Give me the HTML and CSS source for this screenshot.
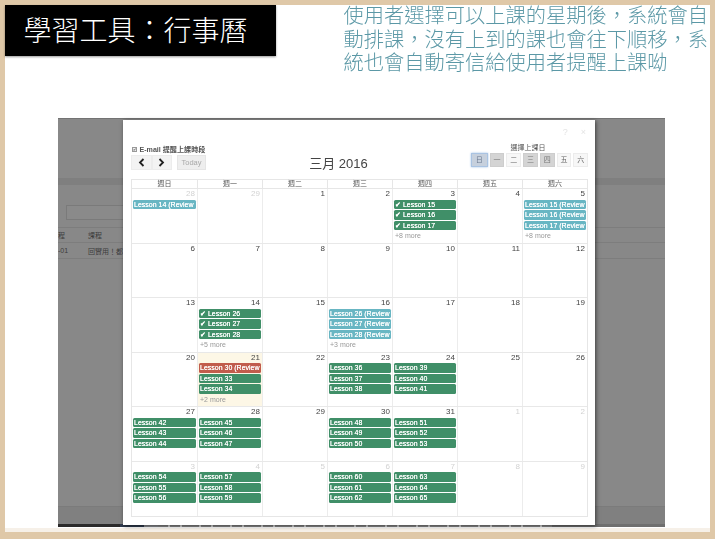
FILE: index.html
```html
<!DOCTYPE html>
<html lang="zh-Hant">
<head>
<meta charset="utf-8">
<title>學習工具：行事曆</title>
<link rel="stylesheet" href="styles.css">
</head>
<body>
<main class="slide">
  <header class="top">
    <h1 class="title">學習工具：行事曆</h1>
    <p class="desc">使用者選擇可以上課的星期後，系統會自動排課，沒有上到的課也會往下順移，系統也會自動寄信給使用者提醒上課呦</p>
  </header>
  <section class="screen">
    <div class="bg-band"></div>
    <div class="bg-input"></div>
    <div class="bg-head"><span class="bg-c1">程</span><span>課程</span></div>
    <div class="bg-row"><span class="bg-c1">-01</span><span>回實用！都</span></div>
    <div class="bg-spacer"></div>
    <div class="bg-foot"></div>
    <div class="bg-strip"></div>
    <div class="modal">
      <div class="help"><span>?</span><span>×</span></div>
      <div class="toolbar">
        <div class="tool-left">
          <label class="email"><span class="check">✔</span><b>E-mail 提醒上課時段</b></label>
          <div class="nav">
            <div class="nav-group"><span class="nav-btn">
              <svg width="7" height="9" viewBox="0 0 7 9"><path d="M5.5 1 2 4.500 5.500 8" fill="none" stroke="#222" stroke-width="1.800"/></svg>
            </span><span class="nav-btn">
              <svg width="7" height="9" viewBox="0 0 7 9"><path d="M1.500 1 5 4.500 1.500 8" fill="none" stroke="#222" stroke-width="1.800"/></svg>
            </span></div>
            <span class="today">Today</span>
          </div>
        </div>
        <h2 class="month">三月 2016</h2>
        <div class="tool-right">
          <div class="pick-label">選擇上課日</div>
          <div class="days">
            <span class="day focus">日</span><span class="day on">一</span><span class="day">二</span><span class="day on">三</span><span class="day on">四</span><span class="day">五</span><span class="day">六</span>
          </div>
        </div>
      </div>
      <div class="calendar">
        <div class="cal-head"><span>週日</span><span>週一</span><span>週二</span><span>週三</span><span>週四</span><span>週五</span><span>週六</span></div>
        <div class="weeks">
          <div class="week">
            <div class="cell"><span class="num dim">28</span><span class="ev teal">Lesson 14 (Review</span></div>
            <div class="cell"><span class="num dim">29</span></div>
            <div class="cell"><span class="num">1</span></div>
            <div class="cell"><span class="num">2</span></div>
            <div class="cell"><span class="num">3</span><span class="ev green">✔ Lesson 15</span><span class="ev green">✔ Lesson 16</span><span class="ev green">✔ Lesson 17</span><span class="more">+8 more</span></div>
            <div class="cell"><span class="num">4</span></div>
            <div class="cell"><span class="num">5</span><span class="ev teal">Lesson 15 (Review</span><span class="ev teal">Lesson 16 (Review</span><span class="ev teal">Lesson 17 (Review</span><span class="more">+8 more</span></div>
          </div>
          <div class="week">
            <div class="cell"><span class="num">6</span></div>
            <div class="cell"><span class="num">7</span></div>
            <div class="cell"><span class="num">8</span></div>
            <div class="cell"><span class="num">9</span></div>
            <div class="cell"><span class="num">10</span></div>
            <div class="cell"><span class="num">11</span></div>
            <div class="cell"><span class="num">12</span></div>
          </div>
          <div class="week">
            <div class="cell"><span class="num">13</span></div>
            <div class="cell"><span class="num">14</span><span class="ev green">✔ Lesson 26</span><span class="ev green">✔ Lesson 27</span><span class="ev green">✔ Lesson 28</span><span class="more">+5 more</span></div>
            <div class="cell"><span class="num">15</span></div>
            <div class="cell"><span class="num">16</span><span class="ev teal">Lesson 26 (Review</span><span class="ev teal">Lesson 27 (Review</span><span class="ev teal">Lesson 28 (Review</span><span class="more">+3 more</span></div>
            <div class="cell"><span class="num">17</span></div>
            <div class="cell"><span class="num">18</span></div>
            <div class="cell"><span class="num">19</span></div>
          </div>
          <div class="week">
            <div class="cell"><span class="num">20</span></div>
            <div class="cell today-cell"><span class="num">21</span><span class="ev red">Lesson 30 (Review</span><span class="ev green">Lesson 33</span><span class="ev green">Lesson 34</span><span class="more">+2 more</span></div>
            <div class="cell"><span class="num">22</span></div>
            <div class="cell"><span class="num">23</span><span class="ev green">Lesson 36</span><span class="ev green">Lesson 37</span><span class="ev green">Lesson 38</span></div>
            <div class="cell"><span class="num">24</span><span class="ev green">Lesson 39</span><span class="ev green">Lesson 40</span><span class="ev green">Lesson 41</span></div>
            <div class="cell"><span class="num">25</span></div>
            <div class="cell"><span class="num">26</span></div>
          </div>
          <div class="week">
            <div class="cell"><span class="num">27</span><span class="ev green">Lesson 42</span><span class="ev green">Lesson 43</span><span class="ev green">Lesson 44</span></div>
            <div class="cell"><span class="num">28</span><span class="ev green">Lesson 45</span><span class="ev green">Lesson 46</span><span class="ev green">Lesson 47</span></div>
            <div class="cell"><span class="num">29</span></div>
            <div class="cell"><span class="num">30</span><span class="ev green">Lesson 48</span><span class="ev green">Lesson 49</span><span class="ev green">Lesson 50</span></div>
            <div class="cell"><span class="num">31</span><span class="ev green">Lesson 51</span><span class="ev green">Lesson 52</span><span class="ev green">Lesson 53</span></div>
            <div class="cell"><span class="num dim">1</span></div>
            <div class="cell"><span class="num dim">2</span></div>
          </div>
          <div class="week">
            <div class="cell"><span class="num dim">3</span><span class="ev green">Lesson 54</span><span class="ev green">Lesson 55</span><span class="ev green">Lesson 56</span></div>
            <div class="cell"><span class="num dim">4</span><span class="ev green">Lesson 57</span><span class="ev green">Lesson 58</span><span class="ev green">Lesson 59</span></div>
            <div class="cell"><span class="num dim">5</span></div>
            <div class="cell"><span class="num dim">6</span><span class="ev green">Lesson 60</span><span class="ev green">Lesson 61</span><span class="ev green">Lesson 62</span></div>
            <div class="cell"><span class="num dim">7</span><span class="ev green">Lesson 63</span><span class="ev green">Lesson 64</span><span class="ev green">Lesson 65</span></div>
            <div class="cell"><span class="num dim">8</span></div>
            <div class="cell"><span class="num dim">9</span></div>
          </div>
        </div>
      </div>
    </div>
  </section>
</main>
</body>
</html>
```
FILE: styles.css
```css
* { box-sizing: border-box; }
html, body { margin: 0; height: 100%; }
body {
  width: 715px;
  height: 539px;
  overflow: hidden;
  background: #dfc8a8;
  font-family: "Liberation Sans", "Noto Sans CJK TC", sans-serif;
}
.slide {
  width: 705px;
  height: 523px;
  margin: 5px 0 0 5px;
  background: #fff;
  box-shadow: 0 4px 0 #f6f0e8;
  display: flex;
  flex-direction: column;
}
.top {
  height: 113px;
  display: flex;
  align-items: flex-start;
  flex: none;
}
.title {
  width: 271px;
  height: 51px;
  margin: 0;
  padding: 0 0 0 18.500px;
  background: #000;
  color: #fff;
  font: 300 28px/49px "Noto Sans CJK TC", sans-serif;
  box-shadow: 0 1px 2px rgba(0, 0, 0, .4);
  white-space: nowrap;
}
.desc {
  width: 366px;
  margin: -2px 0 0 67.500px;
  color: #5b98a6;
  font: 300 20.250px/23.500px "Noto Sans CJK TC", sans-serif;
  filter: blur(.3px);
}
.screen {
  position: relative;
  width: 607px;
  height: 409px;
  margin-left: 53px;
  flex: none;
  display: flex;
  flex-direction: column;
  background: #888;
  border-top: 1px solid #737373;
  color: #3f3f3f;
  font-size: 7px;
  filter: blur(.35px);
}
.bg-band { height: 7px; margin-top: 59px; background: #7f7f7f; flex: none; }
.bg-input {
  width: 100px;
  height: 15px;
  margin: 20px 0 0 8px;
  border: 1px solid #7a7a7a;
  background: #8a8a8a;
  flex: none;
}
.bg-head, .bg-row {
  height: 16px;
  display: flex;
  align-items: center;
  flex: none;
  border-bottom: 1px solid #7d7d7d;
  color: #3c3c3c;
}
.bg-head { margin-top: 7px; border-top: 1px solid #7d7d7d; }
.bg-c1 { width: 30px; flex: none; }
.bg-spacer { flex: 1; }
.bg-foot { height: 18px; border-top: 1px solid #7b7b7b; background: #808080; flex: none; }
.bg-strip {
  height: 3px;
  flex: none;
  background:
    linear-gradient(90deg, #2b2a2a 0 62px, #2f3a4d 62px 86px, #8d8f93 86px 100px, transparent 100px 494px, #6f6f6f 494px),
    repeating-linear-gradient(90deg, #8b8b8b 0 17px, #dcdcdc 17px 19px, #8b8b8b 19px 29px, #dcdcdc 29px 31px);
}
.modal {
  position: absolute;
  left: 65px;
  top: 1px;
  width: 472px;
  height: 405px;
  padding: 8px 7px 0 8px;
  background: #fff;
  box-shadow: 1px 1px 4px rgba(0, 0, 0, .55);
  display: flex;
  flex-direction: column;
}
.help {
  height: 8px;
  margin-bottom: 7px;
  padding-right: 2px;
  display: flex;
  justify-content: flex-end;
  gap: 13px;
  color: #e4e4e4;
  font-size: 9px;
  line-height: 8px;
  flex: none;
}
.toolbar {
  height: 36px;
  display: flex;
  justify-content: space-between;
  flex: none;
}
.tool-left { width: 75px; display: flex; flex-direction: column; }
.email {
  height: 10px;
  margin-top: 1px;
  padding-left: 1px;
  display: flex;
  align-items: center;
  gap: 2.500px;
  color: #555;
  font-size: 7.100px;
  white-space: nowrap;
}
.email b { font-weight: 700; }
.check {
  width: 5px;
  height: 5px;
  border: 1px solid #999;
  background: #eee;
  font-size: 4px;
  line-height: 3px;
  overflow: hidden;
  flex: none;
}
.nav { display: flex; gap: 5px; margin-top: 1px; }
.nav-group { display: flex; flex: none; }
.nav-btn {
  width: 20.500px;
  height: 15px;
  background: #f3f3f3;
  border: 1px solid #ececec;
  display: flex;
  align-items: center;
  justify-content: center;
}
.today {
  width: 29px;
  height: 15px;
  flex: none;
  background: #eeeeee;
  border: 1px solid #e5e5e5;
  color: #a9a9a9;
  font-size: 7.500px;
  line-height: 13px;
  text-align: center;
}
.month {
  margin: 12px 0 0;
  color: #444;
  font: 400 13px/18px "Liberation Sans", "Noto Sans CJK TC", sans-serif;
  white-space: nowrap;
}
.tool-right { width: 117px; display: flex; flex-direction: column; align-items: center; }
.pick-label { height: 10px; margin-right: 3px; color: #555; font-size: 7px; line-height: 9px; }
.days { display: flex; gap: 2px; width: 100%; justify-content: flex-end; }
.day {
  width: 15px;
  height: 14px;
  background: #f7f7f7;
  border: 1px solid #ececec;
  color: #666;
  font-size: 7px;
  line-height: 12px;
  text-align: center;
}
.day.on { background: #d4d4d4; border-color: #cdcdcd; color: #777; }
.day.focus {
  width: 17px;
  background: #c6d0dd;
  border-color: #a9c3e2;
  color: #6a7a90;
  box-shadow: 0 0 2px #9fc0e6;
}
.calendar {
  width: 457px;
  height: 338px;
  display: flex;
  flex-direction: column;
  flex: none;
  border: 1px solid #e6e6e6;
}
.cal-head {
  height: 9px;
  display: grid;
  grid-template-columns: repeat(7, 1fr);
  border-bottom: 1px solid #e6e6e6;
  color: #555;
  font-size: 7px;
  line-height: 8px;
  text-align: center;
  flex: none;
}
.cal-head span { border-left: 1px solid #e6e6e6; }
.cal-head span:first-child { border-left: 0; }
.weeks { flex: 1; display: grid; grid-auto-rows: 1fr; min-height: 0; }
.week {
  display: grid;
  grid-template-columns: repeat(7, 1fr);
  border-bottom: 1px solid #e8e8e8;
  min-width: 0;
}
.week:last-child { border-bottom: 0; }
.cell {
  min-width: 0;
  padding: 0 1px 0 1px;
  border-left: 1px solid #ececec;
  display: flex;
  flex-direction: column;
}
.cell:first-child { border-left: 0; }
.today-cell { background: #fdf7e6; }
.num {
  height: 10.500px;
  padding: 0 1px;
  color: #444;
  font-size: 8px;
  line-height: 9px;
  text-align: right;
  flex: none;
}
.num.dim { color: #d2d2d2; }
.ev {
  height: 9.500px;
  margin-bottom: 1px;
  padding-left: 1px;
  border-radius: 1.500px;
  color: #fff;
  font-size: 7px;
  line-height: 9.500px;
  text-shadow: 0 0 .4px #fff;
  white-space: nowrap;
  overflow: hidden;
  flex: none;
}
.green { background: #408f68; }
.teal { background: #68b6c3; }
.red { background: #c15c4c; }
.more {
  padding-left: 1px;
  color: #999;
  font-size: 7px;
  line-height: 9px;
}
```
